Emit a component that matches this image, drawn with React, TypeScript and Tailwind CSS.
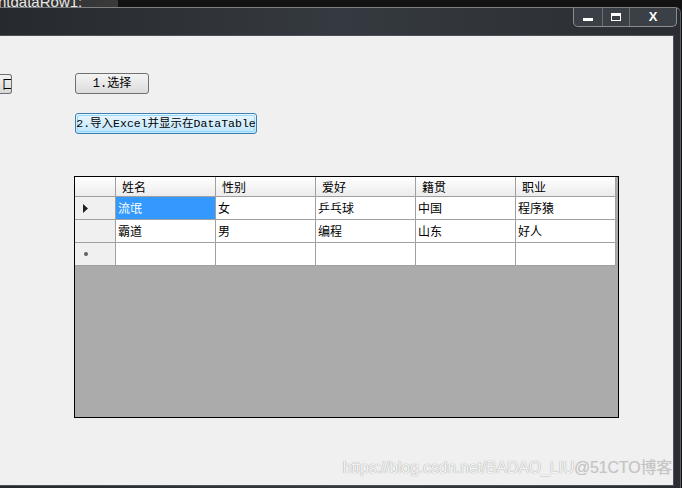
import React from "react";

const cols = ["姓名", "性别", "爱好", "籍贯", "职业"];
const rows = [
  ["流氓", "女", "乒乓球", "中国", "程序猿"],
  ["霸道", "男", "编程", "山东", "好人"],
];

const song = { fontFamily: '"Noto Sans CJK SC", sans-serif' };
const mono = { fontFamily: '"Liberation Mono", "Noto Sans CJK SC", monospace' };

function Cell({ text, selected, header }: { text: string; selected?: boolean; header?: boolean }) {
  return (
    <div
      className={
        "w-[100px] shrink-0 border-r border-[#a0a0a0] text-[12px] leading-none flex items-center overflow-hidden " +
        (header
          ? "pl-[6px] bg-gradient-to-b from-[#ffffff] to-[#ececec] text-black"
          : selected
          ? "pl-[2px] bg-[#3399ff] text-white"
          : "pl-[2px] bg-white text-black")
      }
      style={song}
    >
      {text}
    </div>
  );
}

export default function App() {
  return (
    <div className="w-[682px] h-[488px] bg-[#141414] overflow-hidden flex flex-col">
      {/* top strip */}
      <div className="h-[7px] flex shrink-0 overflow-hidden">
        <div className="w-[118px] bg-gradient-to-r from-[#2e2e2e] to-[#3a3a3a] relative overflow-hidden">
          <div
            className="absolute left-[-2px] top-[-9px] text-[15px] text-[#e8e8e8] whitespace-nowrap"
            style={{ fontFamily: '"Liberation Sans", sans-serif' }}
          >
            ntdataRow1:
          </div>
        </div>
        <div className="flex-1 bg-[#121212]" />
      </div>
      {/* window */}
      <div className="flex-1 flex flex-col border-t border-[#7d8185] bg-gradient-to-r from-[#262a2f] via-[#353a40] to-[#2a2e33] mr-[1px] rounded-tr-[6px] border-r border-r-[#5a5e62]">
        <div className="h-[27px] shrink-0 flex justify-end pr-[3px]">
          <div className="flex h-[19px] border border-t-0 border-[#8a8e92] rounded-b-[5px] overflow-hidden bg-[#3b4046]">
            <div className="w-[29px] flex items-end justify-center pb-[5px] border-r border-[#6a6e72]">
              <div className="w-[10px] h-[3px] bg-white" />
            </div>
            <div className="w-[27px] flex items-center justify-center border-r border-[#6a6e72]">
              <div className="w-[10px] h-[8px] border border-white border-t-[3px]" />
            </div>
            <div className="w-[46px] flex items-center justify-center text-white text-[13px] font-bold" style={{ fontFamily: '"Liberation Sans", sans-serif' }}>
              X
            </div>
          </div>
        </div>
        <div className="flex-1 mr-[6px] mb-[2px] border border-[#4d5155] border-l-0 bg-[#f0f0f0] relative">
          <div className="flex flex-col pt-[37px]">
            <div className="flex items-center h-[21px]">
              <div className="w-[12px] h-[20px] border border-[#707070] rounded-r-[3px] border-l-0 bg-gradient-to-b from-[#f2f2f2] to-[#d8d8d8] flex items-center justify-end overflow-hidden text-[12px]" style={song}>
                <span className="shrink-0 -mr-[3px]">口</span>
              </div>
              <div className="ml-[63px] w-[74px] h-[21px] border border-[#707070] rounded-[3px] bg-gradient-to-b from-[#f4f4f4] to-[#dcdcdc] flex items-center justify-center text-[12px] text-black" style={mono}>
                1.选择
              </div>
            </div>
            <div className="flex mt-[19px]">
              <div className="ml-[75px] w-[182px] h-[21px] border border-[#3c7fb1] rounded-[3px] bg-gradient-to-b from-[#eaf6fd] to-[#bee6fd] flex items-center justify-center p-[1px]">
                <div className="w-full h-full border border-[#96d9f9] rounded-[2px] flex items-center justify-center text-[11.5px] text-black whitespace-nowrap" style={mono}>
                  2.导入Excel并显示在DataTable
                </div>
              </div>
            </div>
            {/* grid */}
            <div className="ml-[74px] mt-[42px] w-[545px] h-[242px] border border-black bg-[#ababab] flex flex-col">
              <div className="flex h-[20px] border-b border-[#a0a0a0] bg-white">
                <div className="w-[41px] shrink-0 border-r border-[#a0a0a0] bg-gradient-to-b from-[#ffffff] to-[#ececec]" />
                {cols.map((c) => (
                  <Cell key={c} text={c} header />
                ))}
                <div className="flex-1 bg-[#ababab]" />
              </div>
              {rows.map((r, i) => (
                <div key={i} className="flex h-[23px] border-b border-[#a0a0a0]">
                  <div className="w-[41px] shrink-0 border-r border-[#a0a0a0] bg-[#f0f0f0] flex items-center pl-[8px]">
                    {i === 0 && (
                      <svg width="5" height="9" viewBox="0 0 5 9">
                        <path d="M0 0 L5 4.5 L0 9 Z" fill="#202020" />
                      </svg>
                    )}
                  </div>
                  {r.map((c, j) => (
                    <Cell key={j} text={c} selected={i === 0 && j === 0} />
                  ))}
                  <div className="flex-1 bg-[#ababab]" />
                </div>
              ))}
              <div className="flex h-[23px] border-b border-[#a0a0a0]">
                <div className="w-[41px] shrink-0 border-r border-[#a0a0a0] bg-[#f0f0f0] flex items-center pl-[9px]">
                  <div className="w-[4px] h-[4px] rounded-full bg-[#606060]" />
                </div>
                {cols.map((_, j) => (
                  <Cell key={j} text="" />
                ))}
                <div className="flex-1 bg-[#ababab]" />
              </div>
            </div>
          </div>
          <div
            className="absolute right-[1px] bottom-[9px] text-[16px] leading-none text-[#f4f4f4] whitespace-nowrap tracking-[-0.2px]"
            style={{ fontFamily: '"Liberation Sans", "Noto Sans CJK SC", sans-serif', textShadow: "0 0 1px #a8a8a8, 0 0 1px #b8b8b8" }}
          >
            https://blog.csdn.net/BADAO_LIU<span className="text-[#c4c4c4]" style={{ textShadow: "0 0 1px #dcdcdc" }}>@51CTO博客</span>
          </div>
        </div>
      </div>
    </div>
  );
}
